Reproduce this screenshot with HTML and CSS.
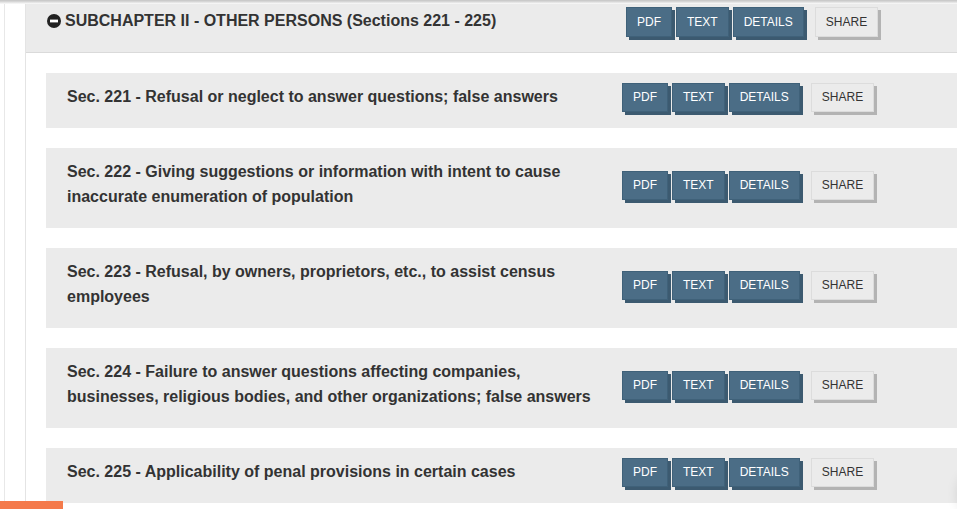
FILE: index.html
```html
<!DOCTYPE html>
<html lang="en">
<head>
<meta charset="utf-8">
<title>Subchapter II - Other Persons</title>
<link rel="stylesheet" href="styles.css">
</head>
<body>
<div class="topshadow"></div>
<div class="outer">
  <div class="inner">
    <div class="subhead">
      <div class="subtitle">
        <svg class="minus" width="14" height="14" viewBox="0 0 14 14" aria-hidden="true"><circle cx="7" cy="7" r="7" fill="#222"/><rect x="3" y="5.6" width="8" height="2.8" fill="#fff"/></svg>
        <span>SUBCHAPTER II - OTHER PERSONS (Sections 221 - 225)</span>
      </div>
      <div class="btns head-btns">
        <span class="btn">PDF</span><span class="btn">TEXT</span><span class="btn">DETAILS</span><span class="btn share">SHARE</span>
      </div>
    </div>
    <div class="list">
      <div class="row">
        <div class="rtitle">Sec. 221 - Refusal or neglect to answer questions; false answers</div>
        <div class="btns"><span class="btn">PDF</span><span class="btn">TEXT</span><span class="btn">DETAILS</span><span class="btn share">SHARE</span></div>
      </div>
      <div class="row">
        <div class="rtitle">Sec. 222 - Giving suggestions or information with intent to cause inaccurate enumeration of population</div>
        <div class="btns"><span class="btn">PDF</span><span class="btn">TEXT</span><span class="btn">DETAILS</span><span class="btn share">SHARE</span></div>
      </div>
      <div class="row">
        <div class="rtitle">Sec. 223 - Refusal, by owners, proprietors, etc., to assist census employees</div>
        <div class="btns"><span class="btn">PDF</span><span class="btn">TEXT</span><span class="btn">DETAILS</span><span class="btn share">SHARE</span></div>
      </div>
      <div class="row">
        <div class="rtitle">Sec. 224 - Failure to answer questions affecting companies, businesses, religious bodies, and other organizations; false answers</div>
        <div class="btns"><span class="btn">PDF</span><span class="btn">TEXT</span><span class="btn">DETAILS</span><span class="btn share">SHARE</span></div>
      </div>
      <div class="row">
        <div class="rtitle">Sec. 225 - Applicability of penal provisions in certain cases</div>
        <div class="btns"><span class="btn">PDF</span><span class="btn">TEXT</span><span class="btn">DETAILS</span><span class="btn share">SHARE</span></div>
      </div>
    </div>
  </div>
</div>
<div class="orange"></div>
<div class="corner"></div>
</body>
</html>
```
FILE: styles.css
```css
* { box-sizing: border-box; }
html, body { margin: 0; padding: 0; }
body {
  width: 957px;
  height: 509px;
  overflow: hidden;
  background: #fff;
  font-family: "Liberation Sans", Arial, sans-serif;
  color: #333;
}
.topshadow {
  height: 4px;
  background: linear-gradient(to bottom, #c4c4c4 0, #dcdcdc 2px, #efefef 3px, #fafafa 4px);
}
.outer {
  margin-left: 4px;
  border-left: 1px solid #e8e8e8;
  padding-left: 20px;
}
.inner {
  border-left: 1px solid #e4e4e4;
}
.subhead {
  display: flex;
  align-items: flex-start;
  gap: 20px;
  height: 49px;
  background: #ebebeb;
  border-bottom: 1px solid #dadada;
  padding-left: 21px;
}
.subtitle {
  width: 559px;
  display: flex;
  align-items: center;
  gap: 4px;
  padding-top: 5px;
  font-size: 16px;
  font-weight: bold;
  line-height: 24px;
  color: #333;
}
.minus { flex: none; margin-top: 0; }
.list {
  padding: 20px 0 0 20px;
  display: flex;
  flex-direction: column;
  gap: 20px;
}
.row {
  display: flex;
  align-items: center;
  gap: 20px;
  background: #ebebeb;
  padding: 11px 0 19px 21px;
}
.rtitle {
  width: 535px;
  font-size: 16px;
  font-weight: bold;
  line-height: 25px;
  color: #333;
}
.btns {
  display: flex;
  gap: 4px;
  margin: -2px 0 -4px;
}
.head-btns { margin: 3px 0 0; }
.btn {
  display: block;
  font-size: 12px;
  line-height: 13px;
  padding: 7px 10px;
  color: #fff;
  background: #4b6d86;
  border: 1px solid #3f6179;
  box-shadow: 3px 3px 0 #3c5a70;
}
.head-btns .btn { line-height: 14px; }
.btn.share {
  margin-left: 7px;
  background: #ebebeb;
  border-color: #dcdcdc;
  color: #333;
  box-shadow: 3px 3px 0 #b3b3b3;
}
.orange {
  position: fixed;
  left: 0;
  bottom: 0;
  width: 63px;
  height: 8px;
  background: #f47a4b;
}
.corner {
  position: fixed;
  right: -44px;
  bottom: -10px;
  width: 44px;
  height: 50px;
  border-radius: 50%;
  box-shadow: 0 0 12px rgba(0,0,0,0.10);
  background: #fff;
}
```
